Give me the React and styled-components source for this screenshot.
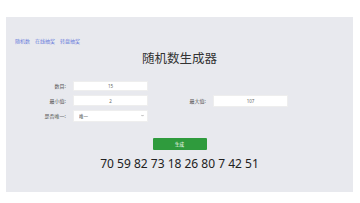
import styled, { createGlobalStyle } from "styled-components";

const GlobalStyle = createGlobalStyle`
  html, body {
    margin: 0;
    padding: 0;
    background: #ffffff;
  }
  body {
    font-family: "Noto Sans", "Noto Sans CJK SC", sans-serif;
  }
`;

const Panel = styled.div`
  margin: 17px 7px 0 6px;
  height: 175px;
  box-sizing: border-box;
  background: #e8e9ee;
  padding-top: 21px;
`;

const NavLinks = styled.div`
  display: flex;
  gap: 5px;
  padding-left: 9px;
  font-size: 5px;
  line-height: 6px;
  font-family: "Noto Sans CJK SC", sans-serif;
`;

const NavLink = styled.a`
  color: #6d80dc;
  text-decoration: none;
`;

const Title = styled.h1`
  margin: 7px 0 0;
  text-align: center;
  font-size: 12.5px;
  line-height: 14px;
  font-weight: 400;
  color: #333333;
  font-family: "Noto Sans CJK SC", sans-serif;
`;

const Form = styled.div`
  margin: 15px 0 0 32px;
  display: grid;
  grid-template-columns: 110px 110px;
  column-gap: 30px;
  row-gap: 4px;
`;

const Field = styled.div`
  display: flex;
  align-items: center;
  gap: 7px;
  height: 11px;
  line-height: 1;
  grid-column: ${(p) => p.$col || "auto"};
`;

const Label = styled.label`
  width: 28px;
  text-align: right;
  font-size: 5px;
  color: #555555;
  font-family: "Noto Sans CJK SC", sans-serif;
  white-space: nowrap;
`;

const Input = styled.input`
  display: block;
  box-sizing: border-box;
  width: 75px;
  height: ${(p) => p.$h || 11}px;
  border: 1px solid #eeeeee;
  background: #ffffff;
  font-size: 4.5px;
  color: #666666;
  text-align: center;
  padding: 0;
  outline: none;
  font-family: "Noto Sans", sans-serif;
`;

const SelectWrap = styled.div`
  position: relative;
  width: 75px;
  height: 12px;
`;

const Select = styled.select`
  display: block;
  appearance: none;
  box-sizing: border-box;
  width: 100%;
  height: 100%;
  border: 1px solid #eeeeee;
  background: #ffffff;
  font-size: 4.5px;
  color: #444444;
  padding: 0 0 0 5px;
  outline: none;
  font-family: "Noto Sans CJK SC", sans-serif;
`;

const Chevron = styled.svg`
  position: absolute;
  right: 4px;
  top: 4.5px;
  width: 3px;
  height: 3px;
  pointer-events: none;
`;

const ButtonRow = styled.div`
  display: flex;
  justify-content: center;
  margin-top: 17px;
`;

const Button = styled.button`
  width: 54px;
  height: 12px;
  border: none;
  border-radius: 1px;
  background: #2f9b3d;
  color: #ffffff;
  font-size: 4.5px;
  padding: 0;
  font-family: "Noto Sans CJK SC", sans-serif;
`;

const Result = styled.div`
  margin-top: 6px;
  text-align: center;
  font-size: 12px;
  line-height: 16px;
  color: #222222;
  font-family: "Noto Sans", sans-serif;
`;

const numbers = [70, 59, 82, 73, 18, 26, 80, 7, 42, 51];

export default function App() {
  return (
    <>
      <GlobalStyle />
      <Panel>
        <NavLinks>
          <NavLink href="#">随机数</NavLink>
          <NavLink href="#">在线抽奖</NavLink>
          <NavLink href="#">转盘抽奖</NavLink>
        </NavLinks>
        <Title>随机数生成器</Title>
        <Form>
          <Field $col="1">
            <Label>数目:</Label>
            <Input readOnly value="15" $h={10} />
          </Field>
          <Field $col="1">
            <Label>最小值:</Label>
            <Input readOnly value="2" />
          </Field>
          <Field $col="2">
            <Label>最大值:</Label>
            <Input readOnly value="107" $h={12} />
          </Field>
          <Field $col="1">
            <Label>是否唯一:</Label>
            <SelectWrap>
              <Select defaultValue="yes">
                <option value="yes">唯一</option>
                <option value="no">可重复</option>
              </Select>
              <Chevron viewBox="0 0 10 10">
                <path d="M1 3 L5 7 L9 3" fill="none" stroke="#666" strokeWidth="1.6" />
              </Chevron>
            </SelectWrap>
          </Field>
        </Form>
        <ButtonRow>
          <Button>生成</Button>
        </ButtonRow>
        <Result>{numbers.join(" ")}</Result>
      </Panel>
    </>
  );
}
